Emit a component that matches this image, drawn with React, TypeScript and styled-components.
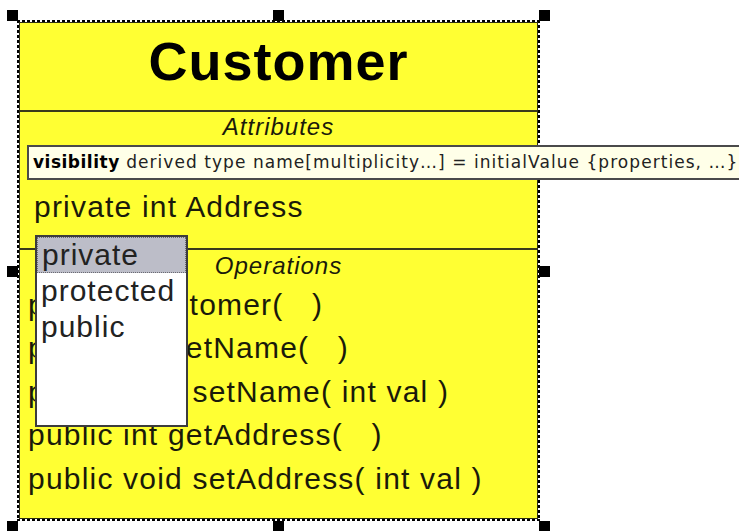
import styled, { createGlobalStyle } from 'styled-components'

const GlobalStyle = createGlobalStyle`
  body {
    margin: 0;
    background: #ffffff;
    overflow: hidden;
    font-family: "Liberation Sans", Arial, sans-serif;
  }
`

const operations = [
   'public  Customer(   )',
   'public int getName(   )',
   'public void setName( int val )',
   'public int getAddress(   )',
   'public void setAddress( int val )',
]

const visibilityOptions = ['private', 'protected', 'public']

type HandleProps = { $x: number; $y: number }

const handles: HandleProps[] = [
   { $x: -10, $y: -10 },
   { $x: 256, $y: -10 },
   { $x: 522, $y: -10 },
   { $x: -10, $y: 246 },
   { $x: 522, $y: 246 },
   { $x: -10, $y: 501 },
   { $x: 256, $y: 501 },
   { $x: 522, $y: 501 },
]

const App = () => {
   return (
      <Page>
         <GlobalStyle />
         <SelectionFrame>
            {handles.map((h, i) => (
               <Handle key={i} $x={h.$x} $y={h.$y} />
            ))}
            <ClassBox>
               <NameCompartment>
                  <ClassName>Customer</ClassName>
               </NameCompartment>

               <AttributesCompartment>
                  <CompartmentLabel>Attributes</CompartmentLabel>
                  <AttributeRow>private int Address</AttributeRow>
               </AttributesCompartment>

               <OperationsCompartment>
                  <CompartmentLabel $gap={2}>Operations</CompartmentLabel>
                  <OperationList>
                     {operations.map(op => (
                        <OperationRow key={op}>{op}</OperationRow>
                     ))}
                  </OperationList>
               </OperationsCompartment>

               <SyntaxHint>
                  <strong>visibility</strong> derived type name[multiplicity…] = initialValue {'{'}properties, …{'}'}
               </SyntaxHint>

               <VisibilityList>
                  {visibilityOptions.map((v, i) => (
                     <ListItem key={v} $selected={i === 0}>{v}</ListItem>
                  ))}
               </VisibilityList>
            </ClassBox>
         </SelectionFrame>
      </Page>
   )
}

export default App

const Page = styled.div`
   width: 739px;
   height: 531px;
   overflow: hidden;
   box-sizing: border-box;
   padding: 20px 0 0 17px;
`

const SelectionFrame = styled.div`
   position: relative;
   width: 523px;
   height: 501px;
   padding: 2px;
   box-sizing: border-box;
   background:
      repeating-linear-gradient(90deg, #000 0 3px, transparent 3px 5px) top left / 100% 2px no-repeat,
      repeating-linear-gradient(90deg, #000 0 3px, transparent 3px 5px) bottom left / 100% 2px no-repeat,
      repeating-linear-gradient(180deg, #000 0 3px, transparent 3px 5px) top left / 2px 100% no-repeat,
      repeating-linear-gradient(180deg, #000 0 3px, transparent 3px 5px) top right / 2px 100% no-repeat;
`

const Handle = styled.div<HandleProps>`
   position: absolute;
   left: ${p => p.$x}px;
   top: ${p => p.$y}px;
   width: 11px;
   height: 11px;
   background: #000;
`

const ClassBox = styled.div`
   position: relative;
   height: 100%;
   box-sizing: border-box;
   border: 1px solid #2e2e14;
   background: #ffff33;
   color: #1a1a0a;
   display: flex;
   flex-direction: column;
`

const NameCompartment = styled.div`
   height: 89px;
   padding-bottom: 11px;
   box-sizing: border-box;
   display: flex;
   align-items: center;
   justify-content: center;
   border-bottom: 2px solid #3a3a1a;
`

const ClassName = styled.h1`
   margin: 0;
   font-size: 54px;
   font-weight: bold;
   letter-spacing: 1px;
   color: #000;
`

const AttributesCompartment = styled.div`
   height: 136px;
   border-bottom: 2px solid #3a3a1a;
   display: flex;
   flex-direction: column;
`

const OperationsCompartment = styled.div`
   flex: 1;
   display: flex;
   flex-direction: column;
`

const CompartmentLabel = styled.div<{ $gap?: number }>`
   margin-top: ${p => p.$gap ?? 1}px;
   text-align: center;
   font-size: 24px;
   line-height: 28px;
   font-style: italic;
   letter-spacing: 1px;
`

const AttributeRow = styled.div`
   margin-top: 48px;
   padding-left: 14px;
   font-size: 30px;
   line-height: 36px;
   letter-spacing: 1.2px;
   white-space: pre;
`

const OperationList = styled.div`
   margin-top: 3px;
   padding-left: 8px;
   display: flex;
   flex-direction: column;
`

const OperationRow = styled.div`
   font-size: 30px;
   line-height: 43.4px;
   letter-spacing: 1.2px;
   white-space: pre;
`

const SyntaxHint = styled.div`
   position: absolute;
   left: 7px;
   top: 122px;
   height: 35px;
   box-sizing: border-box;
   padding: 0 30px 0 4px;
   border: 2px solid #4a4a4a;
   background: #ffffe8;
   color: #222;
   font-family: "DejaVu Sans", Verdana, sans-serif;
   font-size: 17px;
   letter-spacing: 1.05px;
   line-height: 31px;
   white-space: nowrap;

   strong {
      font-weight: bold;
      letter-spacing: 0.5px;
      color: #000;
   }
`

const VisibilityList = styled.ul`
   position: absolute;
   left: 15px;
   top: 212px;
   width: 153px;
   height: 192px;
   margin: 0;
   padding: 0;
   list-style: none;
   box-sizing: border-box;
   border: 2px solid #3c3c3c;
   background: #ffffff;
`

const ListItem = styled.li<{ $selected: boolean }>`
   height: 36px;
   box-sizing: border-box;
   padding-left: 4px;
   font-size: 30px;
   line-height: ${p => (p.$selected ? 34 : 36)}px;
   letter-spacing: 1px;
   color: #222;
   background: ${p => (p.$selected ? '#bcbdc8' : 'transparent')};
   border: ${p => (p.$selected ? '1px dotted #6a6a72' : 'none')};
`
